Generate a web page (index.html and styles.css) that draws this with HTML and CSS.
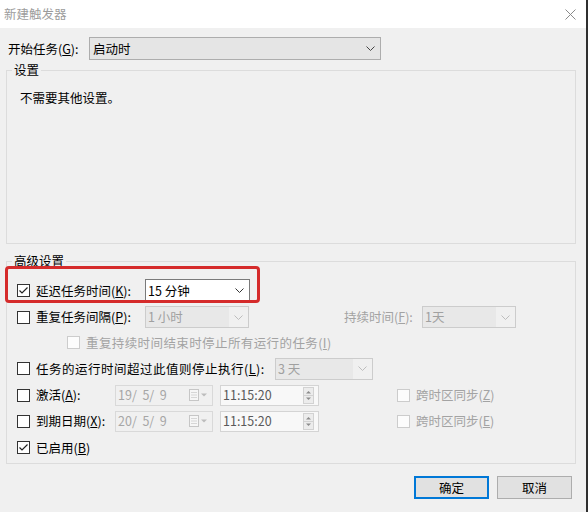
FILE: index.html
```html
<!DOCTYPE html>
<html lang="zh-CN">
  <head>
    <meta charset="utf-8" />
    <title>新建触发器</title>
    <link rel="stylesheet" href="styles.css">
  </head>
  <body>
    <div class="window">
      <div class="titlebar">
        <span class="title">新建触发器</span>
        <svg class="close" width="11" height="11" viewBox="0 0 11 11"><path d="M0.5 0.5L10.5 10.5M10.5 0.5L0.5 10.5" stroke="#8a8a8a" fill="none"/></svg>
      </div>

      <div class="content">
        <div class="start-row">
          <label>开始任务(<u>G</u>):</label>
          <div class="combo combo-start">
            <span>启动时</span>
            <svg width="9" height="5" viewBox="0 0 9 5"><path d="M0.5 0.5L4.5 4.5L8.5 0.5" stroke="#444" fill="none"/></svg>
          </div>
        </div>

        <fieldset class="group group-settings">
          <legend>设置</legend>
          <p class="note">不需要其他设置。</p>
        </fieldset>

        <fieldset class="group group-adv">
          <legend>高级设置</legend>
          <div class="rows">
            <div class="row row-1">
              <div class="highlight"></div>
              <span class="check"><svg width="11" height="11" viewBox="0 0 11 11"><path d="M1.5 5.5L4 8L9.5 2.5" stroke="#222" stroke-width="1.2" fill="none"/></svg></span>
              <label class="lbl lbl-short">延迟任务时间(<u>K</u>):</label>
              <div class="combo combo-edit">
                <span>15 分钟</span>
                <svg width="9" height="5" viewBox="0 0 9 5"><path d="M0.5 0.5L4.5 4.5L8.5 0.5" stroke="#333" fill="none"/></svg>
              </div>
            </div>

            <div class="row row-2">
              <span class="check"></span>
              <label class="lbl lbl-short">重复任务间隔(<u>P</u>):</label>
              <div class="combo combo-off combo-interval">
                <span class="combo-text">1 小时</span>
                <span class="combo-arrow"><svg width="9" height="5" viewBox="0 0 9 5"><path d="M0.5 0.5L4.5 4.5L8.5 0.5" stroke="#bdbdbd" fill="none"/></svg></span>
              </div>
              <label class="lbl off lbl-duration">持续时间(<u>F</u>):</label>
              <div class="combo combo-off combo-duration">
                <span class="combo-text">1天</span>
                <span class="combo-arrow"><svg width="9" height="5" viewBox="0 0 9 5"><path d="M0.5 0.5L4.5 4.5L8.5 0.5" stroke="#bdbdbd" fill="none"/></svg></span>
              </div>
            </div>

            <div class="row row-3">
              <span class="check check-off"></span>
              <label class="lbl off lbl-wide">重复持续时间结束时停止所有运行的任务(<u>I</u>)</label>
            </div>

            <div class="row row-4">
              <span class="check"></span>
              <label class="lbl lbl-long">任务的运行时间超过此值则停止执行(<u>L</u>):</label>
              <div class="combo combo-off combo-stop">
                <span class="combo-text">3 天</span>
                <span class="combo-arrow"><svg width="9" height="5" viewBox="0 0 9 5"><path d="M0.5 0.5L4.5 4.5L8.5 0.5" stroke="#bdbdbd" fill="none"/></svg></span>
              </div>
            </div>

            <div class="row row-5">
              <span class="check"></span>
              <label class="lbl lbl-date">激活(<u>A</u>):</label>
              <div class="date">
                <span class="date-text">19/  5/  9</span>
                <svg width="19" height="12" viewBox="0 0 19 12"><rect x="0.5" y="0.5" width="9" height="11" fill="#f6f6f6" stroke="#c6c6c6"/><path d="M2 3.5h6M2 6h6M2 8.5h6" stroke="#d6d6d6"/><path d="M12 4.5H18L15 7.5Z" fill="#bcbcbc"/></svg>
              </div>
              <div class="time">
                <span>11:15:20</span>
                <svg width="11" height="17" viewBox="0 0 11 17"><rect x="0.5" y="0.5" width="10" height="16" fill="#ececec" stroke="#d2d2d2"/><path d="M3 6.5L5.5 4L8 6.5Z" fill="#8c8c8c"/><path d="M1 8.5H10" stroke="#d2d2d2"/><path d="M3 10.5H8L5.5 13Z" fill="#8c8c8c"/></svg>
              </div>
              <span class="check check-off sync"></span>
              <label class="lbl off">跨时区同步(<u>Z</u>)</label>
            </div>

            <div class="row row-6">
              <span class="check"></span>
              <label class="lbl lbl-date">到期日期(<u>X</u>):</label>
              <div class="date">
                <span class="date-text">20/  5/  9</span>
                <svg width="19" height="12" viewBox="0 0 19 12"><rect x="0.5" y="0.5" width="9" height="11" fill="#f6f6f6" stroke="#c6c6c6"/><path d="M2 3.5h6M2 6h6M2 8.5h6" stroke="#d6d6d6"/><path d="M12 4.5H18L15 7.5Z" fill="#bcbcbc"/></svg>
              </div>
              <div class="time">
                <span>11:15:20</span>
                <svg width="11" height="17" viewBox="0 0 11 17"><rect x="0.5" y="0.5" width="10" height="16" fill="#ececec" stroke="#d2d2d2"/><path d="M3 6.5L5.5 4L8 6.5Z" fill="#8c8c8c"/><path d="M1 8.5H10" stroke="#d2d2d2"/><path d="M3 10.5H8L5.5 13Z" fill="#8c8c8c"/></svg>
              </div>
              <span class="check check-off sync"></span>
              <label class="lbl off">跨时区同步(<u>E</u>)</label>
            </div>

            <div class="row row-7">
              <span class="check"><svg width="11" height="11" viewBox="0 0 11 11"><path d="M1.5 5.5L4 8L9.5 2.5" stroke="#222" stroke-width="1.2" fill="none"/></svg></span>
              <label class="lbl">已启用(<u>B</u>)</label>
            </div>
          </div>
        </fieldset>

        <div class="buttons">
          <button class="btn btn-default">确定</button>
          <button class="btn">取消</button>
        </div>
      </div>
    </div>
  </body>
</html>
```

FILE: styles.css
```css
* {
  box-sizing: border-box;
}
body {
  margin: 0;
  background: #f0f0f0;
  font-family: "Noto Sans CJK SC", "Liberation Sans", sans-serif;
  font-size: 12.5px;
  line-height: 16px;
  color: #000;
}
u {
  text-decoration: underline;
  text-underline-offset: 1px;
}
.window {
  width: 588px;
  height: 512px;
  border-right: 2px solid #2f2f2f;
  background: #f0f0f0;
}
.titlebar {
  height: 28px;
  background: #fff;
  display: flex;
  align-items: center;
  justify-content: space-between;
  padding: 0 10px 0 4px;
}
.title {
  color: #9c9c9c;
}
.content {
  padding: 0 10px 0 6px;
}

/* 开始任务 */
.start-row {
  display: flex;
  align-items: center;
  height: 23px;
  margin-top: 9px;
}
.start-row label {
  width: 83px;
  padding-left: 2px;
}
.combo {
  display: flex;
  align-items: center;
  justify-content: space-between;
  height: 23px;
  border: 1px solid #adadad;
  padding: 0 5px 0 3px;
}
.combo-start {
  width: 292px;
  background: #e5e5e5;
}
.combo-edit {
  width: 105px;
  background: #fff;
  border-color: #7a7a7a;
  padding-left: 2px;
}
.combo-off {
  height: 22px;
  padding: 0;
  border-color: #cccccc;
  background: #f0f0f0;
  color: #a0a0a0;
}
.combo-text {
  flex: 1;
  height: 100%;
  display: flex;
  align-items: center;
  padding-left: 2px;
  background: #e8e8e8;
}
.combo-arrow {
  width: 19px;
  display: flex;
  justify-content: center;
}
.combo-interval {
  width: 104px;
}
.combo-duration {
  width: 94px;
}
.combo-stop {
  width: 98px;
}

/* 分组框 */
.group {
  margin: 0;
  padding: 0;
  min-width: 0;
  border: 1px solid #dcdcdc;
}
.group legend {
  margin-left: 5px;
  padding: 0 2px;
  line-height: 16px;
}
.group-settings {
  margin-top: 2px;
}
.note {
  margin: 0;
  height: 165px;
  padding: 12px 0 0 13px;
}
.group-adv {
  margin-top: 9px;
}
.rows {
  padding: 8px 0 2px;
}
.row {
  display: flex;
  align-items: center;
  padding-left: 10px;
}
.row-1 { height: 27px; position: relative; }
.row-2 { height: 26px; }
.row-3 { height: 25px; padding-left: 60px; }
.row-4 { height: 27px; }
.row-5 { height: 26px; }
.row-6 { height: 26px; }
.row-7 { height: 27px; }

.highlight {
  position: absolute;
  top: -11px;
  left: -2px;
  width: 255px;
  height: 37px;
  border: 3px solid #d52b2b;
  border-radius: 4px;
}

.check {
  width: 13px;
  height: 13px;
  flex: none;
  border: 1px solid #333;
  background: #fff;
  margin-right: 6px;
  display: flex;
  align-items: center;
  justify-content: center;
}
.check-off {
  border-color: #cccccc;
  background: #fcfcfc;
}
.lbl.off {
  color: #a3a3a3;
}
.lbl-short {
  width: 109px;
}
.lbl-duration {
  width: 78px;
  margin-left: 95px;
}
.lbl-long {
  width: 239px;
  letter-spacing: 0.5px;
}
.lbl-wide {
  letter-spacing: 0.4px;
}
.lbl-date {
  width: 79px;
}

/* 日期和时间 */
.date {
  width: 98px;
  height: 21px;
  border: 1px solid #d9d9d9;
  display: flex;
  align-items: center;
  justify-content: space-between;
  padding: 0 4px 0 2px;
  color: #a6a6a6;
}
.date-text {
  white-space: pre;
}
.time {
  width: 99px;
  height: 21px;
  margin-left: 7px;
  border: 1px solid #d4d4d4;
  background: #f8f8f8;
  display: flex;
  align-items: center;
  justify-content: space-between;
  padding: 0 4px 0 2px;
  color: #5a5a5a;
}
.sync {
  margin-left: 78px;
}

/* 按钮 */
.buttons {
  display: flex;
  justify-content: flex-end;
  gap: 8px;
  margin-top: 12px;
  padding-right: 4px;
}
.btn {
  width: 75px;
  height: 23px;
  border: 1px solid #adadad;
  background: #e1e1e1;
  font-family: inherit;
  font-size: 12.5px;
  padding: 0;
  color: #000;
}
.btn-default {
  border: 2px solid #0078d7;
}
```
